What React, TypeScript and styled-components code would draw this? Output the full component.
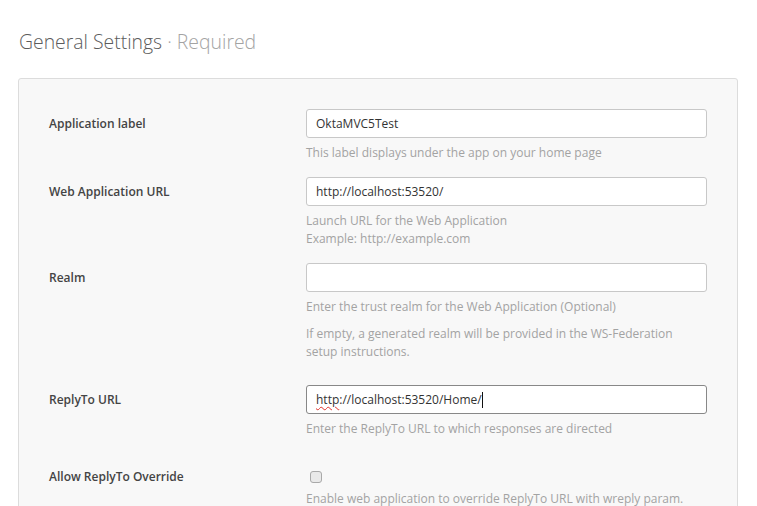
import React from 'react';
import styled, { createGlobalStyle } from 'styled-components';

const GlobalStyle = createGlobalStyle`
  body {
    margin: 0;
    background: #fff;
    font-family: "Open Sans", "Liberation Sans", sans-serif;
  }
`;

type FieldProps = {
  label: string;
  value?: string;
  help?: string[];
  note?: string[];
};

const fields: FieldProps[] = [
  {
    label: 'Application label',
    value: 'OktaMVC5Test',
    help: ['This label displays under the app on your home page'],
  },
  {
    label: 'Web Application URL',
    value: 'http://localhost:53520/',
    help: ['Launch URL for the Web Application', 'Example: http://example.com'],
  },
  {
    label: 'Realm',
    value: '',
    help: ['Enter the trust realm for the Web Application (Optional)'],
    note: ['If empty, a generated realm will be provided in the WS-Federation', 'setup instructions.'],
  },
];

const App: React.FC = () => {
  return (
    <Page>
      <GlobalStyle />
      <Heading>
        General Settings <Muted>· Required</Muted>
      </Heading>
      <Panel>
        {fields.map((f) => (
          <Row key={f.label}>
            <Label>{f.label}</Label>
            <Field>
              <TextInput readOnly value={f.value} />
              {f.help && (
                <Help>
                  {f.help.map((line) => (
                    <div key={line}>{line}</div>
                  ))}
                </Help>
              )}
              {f.note && (
                <Note>
                  {f.note.map((line) => (
                    <div key={line}>{line}</div>
                  ))}
                </Note>
              )}
            </Field>
          </Row>
        ))}
        <Row>
          <Label>ReplyTo URL</Label>
          <Field>
            <FocusedInput>
              <Misspelled>http</Misspelled>://localhost:53520/Home/
              <Caret />
            </FocusedInput>
            <Help>Enter the ReplyTo URL to which responses are directed</Help>
          </Field>
        </Row>
        <CheckRow>
          <CheckLabel>Allow ReplyTo Override</CheckLabel>
          <Field>
            <CheckLine>
              <Checkbox type="checkbox" readOnly />
            </CheckLine>
            <CheckHelp>Enable web application to override ReplyTo URL with wreply param.</CheckHelp>
          </Field>
        </CheckRow>
      </Panel>
    </Page>
  );
};

const Page = styled.div`
  padding: 28px 19px 0 18px;
  height: 506px;
  box-sizing: border-box;
  overflow: hidden;
`;

const Heading = styled.h2`
  margin: 0 0 0 1px;
  font-weight: 300;
  font-size: 19.4px;
  line-height: 28px;
  color: #5c5c5c;
`;

const Muted = styled.span`
  color: #a3a3a3;
`;

const Panel = styled.div`
  margin-top: 22px;
  width: 720px;
  box-sizing: border-box;
  background: #f8f8f8;
  border: 1px solid #dcdcdc;
  border-radius: 3px;
  padding: 30px 30px 40px 30px;
`;

const Row = styled.div`
  display: grid;
  grid-template-columns: 257px 401px;
  margin-bottom: 15px;
`;

const CheckRow = styled(Row)`
  margin-top: 29px;
`;

const Label = styled.div`
  font-size: 12px;
  font-weight: 600;
  color: #444;
  line-height: 30px;
`;

const CheckLabel = styled(Label)`
  line-height: 20px;
`;

const Field = styled.div`
  display: flex;
  flex-direction: column;
`;

const TextInput = styled.input`
  box-sizing: border-box;
  height: 29px;
  width: 100%;
  padding: 0 9px;
  font-family: "Open Sans", "Liberation Sans", sans-serif;
  font-size: 12px;
  color: #333;
  background: #fff;
  border: 1px solid #c8c8c8;
  border-radius: 3px;
  outline: none;
`;

const FocusedInput = styled.div`
  box-sizing: border-box;
  height: 29px;
  display: flex;
  align-items: center;
  padding: 0 9px;
  font-size: 12px;
  color: #333;
  background: #fff;
  border: 1px solid #888;
  border-radius: 3px;
  white-space: pre;
`;

const Misspelled = styled.span`
  text-decoration: underline wavy #e0302a;
  text-decoration-thickness: 1px;
  text-underline-offset: 2px;
`;

const Caret = styled.span`
  display: inline-block;
  width: 1px;
  height: 16px;
  background: #111;
`;

const Help = styled.div`
  margin-top: 6px;
  font-size: 12px;
  line-height: 18px;
  color: #a3a3a3;
`;

const Note = styled(Help)`
  margin-top: 9px;
  margin-bottom: 9px;
`;

const CheckHelp = styled(Help)`
  margin-top: 3px;
`;

const CheckLine = styled.div`
  height: 20px;
  display: flex;
  align-items: center;
`;

const Checkbox = styled.input`
  appearance: none;
  margin: 0 0 0 4px;
  width: 12px;
  height: 12px;
  border: 1px solid #a9a9a9;
  border-radius: 3px;
  background: #e9e9e9;
`;

export default App;
